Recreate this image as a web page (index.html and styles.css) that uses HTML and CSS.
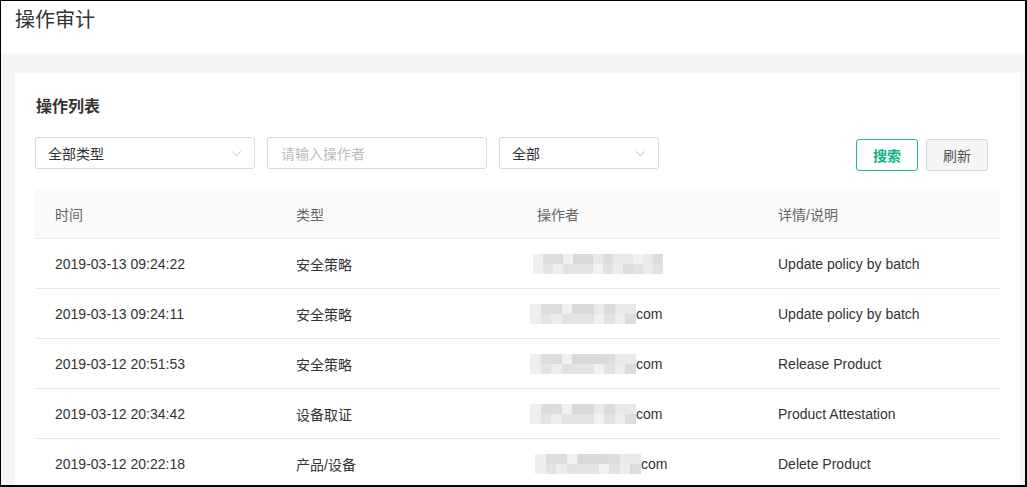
FILE: index.html
```html
<!DOCTYPE html>
<html lang="zh">
<head>
<meta charset="utf-8">
<link rel="stylesheet" href="styles.css">
</head>
<body>
<div class="frame">
  <header class="page-head"><h1>操作审计</h1></header>
  <main class="page-body">
    <section class="card">
      <h2 class="card-title">操作列表</h2>
      <div class="filters">
        <div class="select sel-type"><span>全部类型</span><svg class="chev" viewBox="0 0 12 8"><path d="M1 1.5 6 6.5 11 1.5" fill="none" stroke="#b5b5b5" stroke-width="1"/></svg></div>
        <div class="input"><span>请输入操作者</span></div>
        <div class="select sel-all"><span>全部</span><svg class="chev" viewBox="0 0 12 8"><path d="M1 1.5 6 6.5 11 1.5" fill="none" stroke="#b5b5b5" stroke-width="1"/></svg></div>
        <div class="actions">
          <button class="btn btn-primary">搜索</button>
          <button class="btn">刷新</button>
        </div>
      </div>
      <div class="table">
        <div class="row head">
          <div class="cell">时间</div><div class="cell">类型</div><div class="cell">操作者</div><div class="cell">详情/说明</div>
        </div>
        <div class="row">
          <div class="cell">2019-03-13 09:24:22</div><div class="cell">安全策略</div>
          <div class="cell"><span class="blur w13 off3"><i></i><i></i><i></i><i></i><i></i><i></i><i></i><i></i><i></i><i></i><i></i><i></i><i></i><i></i><i></i><i></i><i></i><i></i><i></i><i></i><i></i><i></i><i></i><i></i><i></i><i></i></span></div>
          <div class="cell">Update policy by batch</div>
        </div>
        <div class="row">
          <div class="cell">2019-03-13 09:24:11</div><div class="cell">安全策略</div>
          <div class="cell"><span class="blur w10 off0"><i></i><i></i><i></i><i></i><i></i><i></i><i></i><i></i><i></i><i></i><i></i><i></i><i></i><i></i><i></i><i></i><i></i><i></i><i></i><i></i></span>com</div>
          <div class="cell">Update policy by batch</div>
        </div>
        <div class="row">
          <div class="cell">2019-03-12 20:51:53</div><div class="cell">安全策略</div>
          <div class="cell"><span class="blur w10 off0 b2"><i></i><i></i><i></i><i></i><i></i><i></i><i></i><i></i><i></i><i></i><i></i><i></i><i></i><i></i><i></i><i></i><i></i><i></i><i></i><i></i></span>com</div>
          <div class="cell">Release Product</div>
        </div>
        <div class="row">
          <div class="cell">2019-03-12 20:34:42</div><div class="cell">设备取证</div>
          <div class="cell"><span class="blur w10 off0"><i></i><i></i><i></i><i></i><i></i><i></i><i></i><i></i><i></i><i></i><i></i><i></i><i></i><i></i><i></i><i></i><i></i><i></i><i></i><i></i></span>com</div>
          <div class="cell">Product Attestation</div>
        </div>
        <div class="row">
          <div class="cell">2019-03-12 20:22:18</div><div class="cell">产品/设备</div>
          <div class="cell"><span class="blur w10 off5 b2"><i></i><i></i><i></i><i></i><i></i><i></i><i></i><i></i><i></i><i></i><i></i><i></i><i></i><i></i><i></i><i></i><i></i><i></i><i></i><i></i></span>com</div>
          <div class="cell">Delete Product</div>
        </div>
      </div>
    </section>
  </main>
</div>
</body>
</html>
```
FILE: styles.css
```css
* { box-sizing: border-box; }
html, body { margin: 0; padding: 0; background: #fff; }
body {
  font-family: "Liberation Sans", "Noto Sans CJK SC", sans-serif;
  color: #333;
  overflow: hidden;
}
.frame {
  width: 1027px;
  height: 487px;
  border-style: solid;
  border-color: #000;
  border-width: 1px 2px 2px 1px;
  overflow: hidden;
  display: flex;
  flex-direction: column;
}
.page-head {
  height: 52px;
  flex: none;
  background: #fff;
  padding: 4px 0 0 14px;
}
.page-head h1 {
  margin: 0;
  font-size: 20px;
  font-weight: 400;
  line-height: 27px;
  color: #333;
  font-family: "Noto Sans CJK SC", sans-serif;
}
.page-body {
  flex: 1;
  background: #f4f5f7;
  padding: 20px 5px 0 14px;
}
.card {
  background: #fff;
  height: 100%;
  padding: 20px 20px 0 20px;
}
.card-title {
  margin: 0;
  font-family: "Noto Sans CJK SC", sans-serif;
  font-size: 16px;
  font-weight: 700;
  line-height: 24px;
  color: #333;
  padding-left: 1px;
}
.filters {
  margin-top: 20px;
  display: flex;
  align-items: flex-start;
  gap: 12px;
}
.select, .input {
  height: 32px;
  border: 1px solid #d9d9d9;
  border-radius: 3px;
  display: flex;
  align-items: center;
  justify-content: space-between;
  padding: 0 12px 0 12px;
  font-family: "Noto Sans CJK SC", sans-serif;
  font-size: 14px;
  color: #333;
}
.sel-type { width: 220px; }
.input { width: 220px; color: #bbb; padding-left: 13px; }
.sel-all { width: 160px; }
.chev { width: 11px; height: 7px; }
.actions {
  margin-left: auto;
  margin-top: 2px;
  display: flex;
  gap: 8px;
  padding-right: 12px;
}
.btn {
  width: 62px;
  height: 32px;
  border-radius: 3px;
  border: 1px solid #d9d9d9;
  background: #f5f5f5;
  color: #555;
  font-family: "Noto Sans CJK SC", sans-serif;
  font-size: 14px;
  padding: 0;
}
.btn-primary {
  background: #fff;
  border-color: #1fb98d;
  color: #10b383;
  font-weight: 700;
}
.table {
  margin-top: 18px;
  width: 965px;
}
.row {
  display: grid;
  grid-template-columns: 241px 241px 241px 242px;
  height: 50px;
  border-bottom: 1px solid #e8e8e8;
  align-items: center;
  font-size: 14px;
  color: #333;
}
.row.head {
  background: #fafafa;
  color: #666;
  border-bottom: 1px solid #ececec;
}
.cell {
  padding-left: 20px;
  display: flex;
  align-items: center;
  white-space: nowrap;
}
.blur {
  display: inline-grid;
  grid-template-rows: 10px 10px;
  grid-auto-flow: column;
  margin-right: 0;
}
.blur.w13 { grid-template-columns: repeat(13, 10px); }
.blur.w10 { grid-template-columns: repeat(10, 10.6px); }
.blur.off3 { margin-left: -4px; }
.blur.off0 { margin-left: -7px; }
.blur.off5 { margin-left: -2px; }
.blur i { display: block; background: #e9e9e9; }
.blur i:nth-child(2n) { background: #e2e2e2; }
.blur i:nth-child(3n) { background: #ededed; }
.blur i:nth-child(5n) { background: #dcdcdc; }
.blur i:nth-child(7n) { background: #f1f1f1; }
.blur i:nth-child(1), .blur i:nth-child(2) { background: #eeeeee; }
.blur i:nth-child(3) { background: #dddddd; }
.blur i:nth-child(4) { background: #e4e4e4; }
.blur i:nth-child(9), .blur i:nth-child(11) { background: #d9d9d9; }
.blur i:nth-child(10), .blur i:nth-child(12) { background: #e3e3e3; }
.blur.b2 i:nth-child(13) { background: #dadada; }
```
